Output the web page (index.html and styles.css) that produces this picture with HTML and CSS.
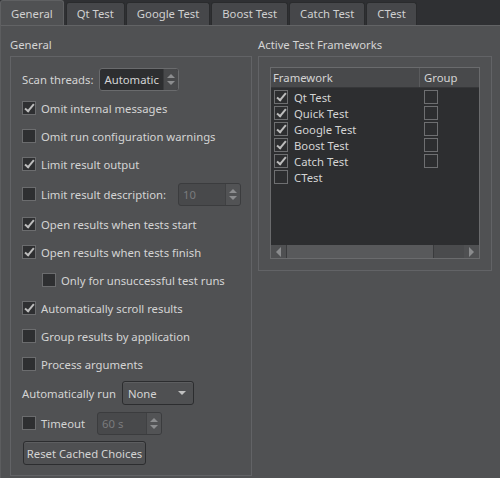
FILE: index.html
```html
<!DOCTYPE html>
<html lang="en">
<head>
    <meta charset="UTF-8">
    <title>Testing Settings</title>
    <link rel="stylesheet" href="styles.css">
</head>
<body>

    <!-- Tab bar -->
    <div class="tabbar">
        <div class="tab active">General</div>
        <div class="tab">Qt Test</div>
        <div class="tab">Google Test</div>
        <div class="tab">Boost Test</div>
        <div class="tab">Catch Test</div>
        <div class="tab">CTest</div>
    </div>

    <div class="panel">
        <!-- General group -->
        <div class="group group-general">
            <div class="group-title">General</div>
            <div class="frame frame-general">
                <div class="row row-wide">
                    <span class="label">Scan threads:</span>
                    <div class="spin spin-threads">
                        <span class="spin-text">Automatic</span>
                        <span class="spin-arrows"><i class="up"></i><i class="down"></i></span>
                    </div>
                </div>
                <div class="row"><span class="check on"></span>Omit internal messages</div>
                <div class="row"><span class="check"></span>Omit run configuration warnings</div>
                <div class="row"><span class="check on"></span>Limit result output</div>
                <div class="row row-desc">
                    <span class="check"></span>Limit result description:
                    <div class="spin disabled spin-desc">
                        <span class="spin-text">10</span>
                        <span class="spin-arrows"><i class="up"></i><i class="down"></i></span>
                    </div>
                </div>
                <div class="row"><span class="check on"></span>Open results when tests start</div>
                <div class="row"><span class="check on"></span>Open results when tests finish</div>
                <div class="row indent"><span class="check"></span>Only for unsuccessful test runs</div>
                <div class="row"><span class="check on"></span>Automatically scroll results</div>
                <div class="row"><span class="check"></span>Group results by application</div>
                <div class="row"><span class="check"></span>Process arguments</div>
                <div class="row row-wide">
                    <span class="label">Automatically run</span>
                    <div class="combo">None<span class="combo-arrow"></span></div>
                </div>
                <div class="row row-wide">
                    <span class="check"></span>Timeout
                    <div class="spin disabled spin-timeout">
                        <span class="spin-text">60 s</span>
                        <span class="spin-arrows"><i class="up"></i><i class="down"></i></span>
                    </div>
                </div>
                <div class="row row-wide">
                    <button class="push">Reset Cached Choices</button>
                </div>
            </div>
        </div>

        <!-- Active frameworks group -->
        <div class="group group-frameworks">
            <div class="group-title">Active Test Frameworks</div>
            <div class="frame frame-frameworks">
                <div class="table">
                    <div class="thead">
                        <div class="col-name">Framework</div>
                        <div class="col-group">Group</div>
                    </div>
                    <div class="tbody">
                        <div class="trow"><div class="col-name"><span class="check small on"></span>Qt Test</div><div class="col-group"><span class="check small"></span></div></div>
                        <div class="trow"><div class="col-name"><span class="check small on"></span>Quick Test</div><div class="col-group"><span class="check small"></span></div></div>
                        <div class="trow"><div class="col-name"><span class="check small on"></span>Google Test</div><div class="col-group"><span class="check small"></span></div></div>
                        <div class="trow"><div class="col-name"><span class="check small on"></span>Boost Test</div><div class="col-group"><span class="check small"></span></div></div>
                        <div class="trow"><div class="col-name"><span class="check small on"></span>Catch Test</div><div class="col-group"><span class="check small"></span></div></div>
                        <div class="trow"><div class="col-name"><span class="check small"></span>CTest</div></div>
                    </div>
                    <div class="hscroll">
                        <span class="sb-btn"><i class="left"></i></span>
                        <span class="sb-handle"></span>
                        <span class="sb-track"></span>
                        <span class="sb-btn"><i class="right"></i></span>
                    </div>
                </div>
            </div>
        </div>
    </div>

</body>
</html>
```

FILE: styles.css
```css
body {
    margin: 0;
    width: 500px;
    height: 478px;
    overflow: hidden;
    background-color: #2f3033;
    font-family: "Noto Sans", sans-serif;
    font-size: 11.3px;
    color: #d4d4d4;
    white-space: nowrap;
}
/* Tabs */
.tabbar {
    display: flex;
    align-items: flex-end;
    height: 25px;
    gap: 1px;
}
.tab {
    box-sizing: border-box;
    height: 23px;
    padding: 0 10px;
    line-height: 21px;
    background-color: #46474a;
    border: 1px solid #2a2b2d;
    border-bottom: none;
    border-radius: 3px 3px 0 0;
    color: #d0d0d0;
}
.tab.active {
    height: 25px;
    line-height: 25px;
    margin-right: 1px;
    background-color: #505153;
    border-color: #5f6062;
}
/* Panel */
.panel {
    box-sizing: border-box;
    display: flex;
    align-items: flex-start;
    gap: 6px;
    height: 453px;
    padding: 11px 8px 0 9px;
    background-color: #505153;
    border-top: 1px solid #626365;
    border-left: 1px solid #5c5d5f;
}
.group-title {
    height: 16px;
    line-height: 16px;
    margin-bottom: 3px;
}
.frame {
    box-sizing: border-box;
    border: 1px solid #626366;
}
.frame-general {
    width: 242px;
    height: 420px;
    padding: 7px 0 0 11px;
    display: flex;
    flex-direction: column;
}
.frame-frameworks {
    width: 234px;
    height: 215px;
    padding: 10px 11px 0 11px;
}
/* Rows */
.row {
    display: flex;
    align-items: center;
    height: 28px;
}
.row-wide {
    height: 30px;
}
.row-desc {
    height: 32px;
}
.indent {
    padding-left: 20px;
}
.label {
    margin-right: 6px;
}
.check {
    box-sizing: border-box;
    display: inline-block;
    flex: none;
    width: 14px;
    height: 14px;
    margin-right: 5px;
    background-color: #2e2f31;
    border: 1px solid #6b6c6e;
    position: relative;
}
.check.on::after {
    content: "";
    position: absolute;
    left: 4px;
    top: 0px;
    width: 3px;
    height: 8px;
    border-right: 2px solid #bdbdbd;
    border-bottom: 2px solid #bdbdbd;
    transform: rotate(40deg);
}
/* Spin boxes */
.spin {
    box-sizing: border-box;
    display: flex;
    height: 23px;
    background-color: #2d2e30;
    border: 1px solid #6a6b6d;
    border-radius: 3px;
    overflow: hidden;
}
.spin-text {
    flex: 1;
    padding-left: 4px;
    line-height: 21px;
}
.spin-arrows {
    display: flex;
    flex-direction: column;
    justify-content: center;
    align-items: center;
    gap: 3px;
    width: 14px;
    background-color: #48494b;
    border-left: 1px solid #3a3b3d;
}
.spin-arrows i {
    width: 0;
    height: 0;
    border-left: 4px solid transparent;
    border-right: 4px solid transparent;
}
.spin-arrows .up {
    border-bottom: 4px solid #8c8d8f;
}
.spin-arrows .down {
    border-top: 4px solid #8c8d8f;
}
.spin.disabled {
    background-color: #48494b;
    border-color: #3b3c3e;
    color: #7a7b7d;
}
.spin.disabled .spin-arrows {
    background-color: #525355;
    border-left-color: #404143;
}
.spin-threads {
    width: 80px;
}
.spin-desc {
    width: 63px;
    margin-left: 12px;
}
.spin-timeout {
    width: 65px;
    margin-left: 12px;
}
/* Combo and button */
.combo {
    box-sizing: border-box;
    display: flex;
    align-items: center;
    width: 72px;
    height: 24px;
    padding-left: 5px;
    background-color: #4f5052;
    border: 1px solid #2c2d2f;
    border-radius: 3px;
    box-shadow: inset 0 1px 0 #5d5e60;
}
.combo-arrow {
    margin-left: auto;
    margin-right: 7px;
    width: 0;
    height: 0;
    border-left: 4px solid transparent;
    border-right: 4px solid transparent;
    border-top: 4px solid #c0c0c0;
}
.push {
    box-sizing: border-box;
    width: 123px;
    height: 24px;
    padding: 0;
    margin-left: 1px;
    font-family: inherit;
    font-size: 11.3px;
    white-space: nowrap;
    color: #d4d4d4;
    background-color: #4f5052;
    border: 1px solid #2c2d2f;
    border-radius: 3px;
    box-shadow: inset 0 1px 0 #5d5e60;
}
/* Framework table */
.table {
    box-sizing: border-box;
    display: flex;
    flex-direction: column;
    width: 210px;
    height: 192px;
    border: 1px solid #6a6b6d;
    background-color: #2d2e30;
}
.thead {
    display: flex;
    height: 20px;
    line-height: 19px;
    background-color: #48494b;
    border-bottom: 1px solid #363739;
    box-sizing: border-box;
}
.thead .col-name {
    border-right: 1px solid #5a5b5d;
    padding-left: 2px;
}
.col-name {
    box-sizing: border-box;
    width: 149px;
    display: flex;
    align-items: center;
}
.col-group {
    display: flex;
    align-items: center;
    padding-left: 4px;
}
.tbody {
    flex: 1;
    padding-top: 1px;
}
.trow {
    display: flex;
    height: 16px;
}
.trow .col-name {
    padding-left: 3px;
}
.check.small {
    width: 14px;
    height: 14px;
    margin-right: 6px;
    background-color: transparent;
    border-color: #6e6f71;
}
.hscroll {
    display: flex;
    height: 13px;
    background-color: #48494b;
}
.sb-btn {
    display: flex;
    align-items: center;
    justify-content: center;
    width: 15px;
    background-color: #4f5052;
}
.sb-btn i {
    width: 0;
    height: 0;
    border-top: 5px solid transparent;
    border-bottom: 5px solid transparent;
}
.sb-btn .left {
    border-right: 5px solid #8a8b8d;
}
.sb-btn .right {
    border-left: 5px solid #8a8b8d;
}
.sb-handle {
    box-sizing: border-box;
    width: 148px;
    background-color: #58595b;
    border: 1px solid #3a3b3d;
    border-top: none;
    border-bottom: none;
}
.sb-track {
    flex: 1;
    background-color: #4a4b4d;
}
```
